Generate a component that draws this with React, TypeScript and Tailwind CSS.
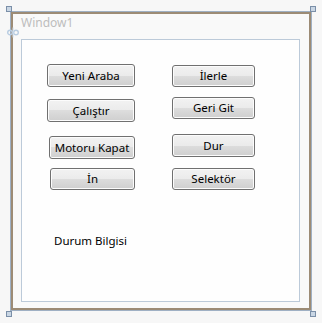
import React from 'react'

const font = { fontFamily: '"Noto Sans", "Open Sans", Arial, sans-serif' }

function WinButton({ label, className = '' }: { label: string; className?: string }) {
  return (
    <button
      className={`flex items-center justify-center rounded-[3px] border border-[#707070] bg-[linear-gradient(#f2f2f2_0%,#ebebeb_50%,#dddddd_50%,#cfcfcf_100%)] text-[11.5px] leading-none text-black shadow-[inset_0_0_0_1px_#fcfcfc] ${className}`}
    >
      {label}
    </button>
  )
}

function Handle({ className }: { className: string }) {
  return <div className={`absolute w-[6px] h-[6px] border border-[#7b8fa8] bg-[#c9d6e4] ${className}`} />
}

export default function App() {
  return (
    <div className="relative w-[322px] h-[323px] bg-[#f7f7f7] overflow-hidden" style={font}>
      {/* Designer frame */}
      <div className="ml-[10px] pt-[11px]">
        <div className="w-[302px] h-[300px] border border-[#9fb0c4]">
          <div className="h-full border-2 border-[#9c8b75] bg-[#f9f9f9] pl-[8px]">
            <div className="h-[25px] pt-[1px] text-[12px] leading-[16px] text-[#bdbdbd]">Window1</div>

            {/* Content area */}
            <div className="w-[279px] h-[263px] border border-[#bccad9] bg-[#fefefe]">
              <div className="flex">
                <div className="w-[113px] flex flex-col items-end">
                  <WinButton label="Yeni Araba" className="mt-[24px] w-[88px] h-[23px]" />
                  <WinButton label="Çalıştır" className="mt-[12px] w-[88px] h-[23px]" />
                  <WinButton label="Motoru Kapat" className="mt-[14px] w-[86px] h-[23px]" />
                  <WinButton label="İn" className="mt-[9px] w-[85px] h-[22px]" />
                </div>
                <div className="ml-[37px] flex flex-col items-start">
                  <WinButton label="İlerle" className="mt-[25px] w-[83px] h-[22px]" />
                  <WinButton label="Geri Git" className="mt-[10px] w-[83px] h-[22px]" />
                  <WinButton label="Dur" className="mt-[15px] w-[83px] h-[23px]" />
                  <WinButton label="Selektör" className="mt-[11px] w-[83px] h-[22px]" />
                </div>
              </div>
              <div className="mt-[43px] pl-[32px] text-[11.5px] leading-[16px] text-black">Durum Bilgisi</div>
            </div>
          </div>
        </div>
      </div>

      {/* Selection handles */}
      <Handle className="left-[6px] top-[6px]" />
      <Handle className="left-[310px] top-[6px]" />
      <Handle className="left-[6px] top-[311px]" />
      <Handle className="left-[310px] top-[311px]" />

      {/* Move glyph */}
      <svg className="absolute left-[7px] top-[27px]" width="12" height="11" viewBox="0 0 12 11">
        <circle cx="3" cy="5.5" r="2.3" fill="none" stroke="#b9cde2" strokeWidth="1.4" />
        <circle cx="9" cy="5.5" r="2.3" fill="none" stroke="#b9cde2" strokeWidth="1.4" />
        <path d="M6 0.5v10" stroke="#c9d9ea" strokeWidth="1" />
      </svg>
    </div>
  )
}
